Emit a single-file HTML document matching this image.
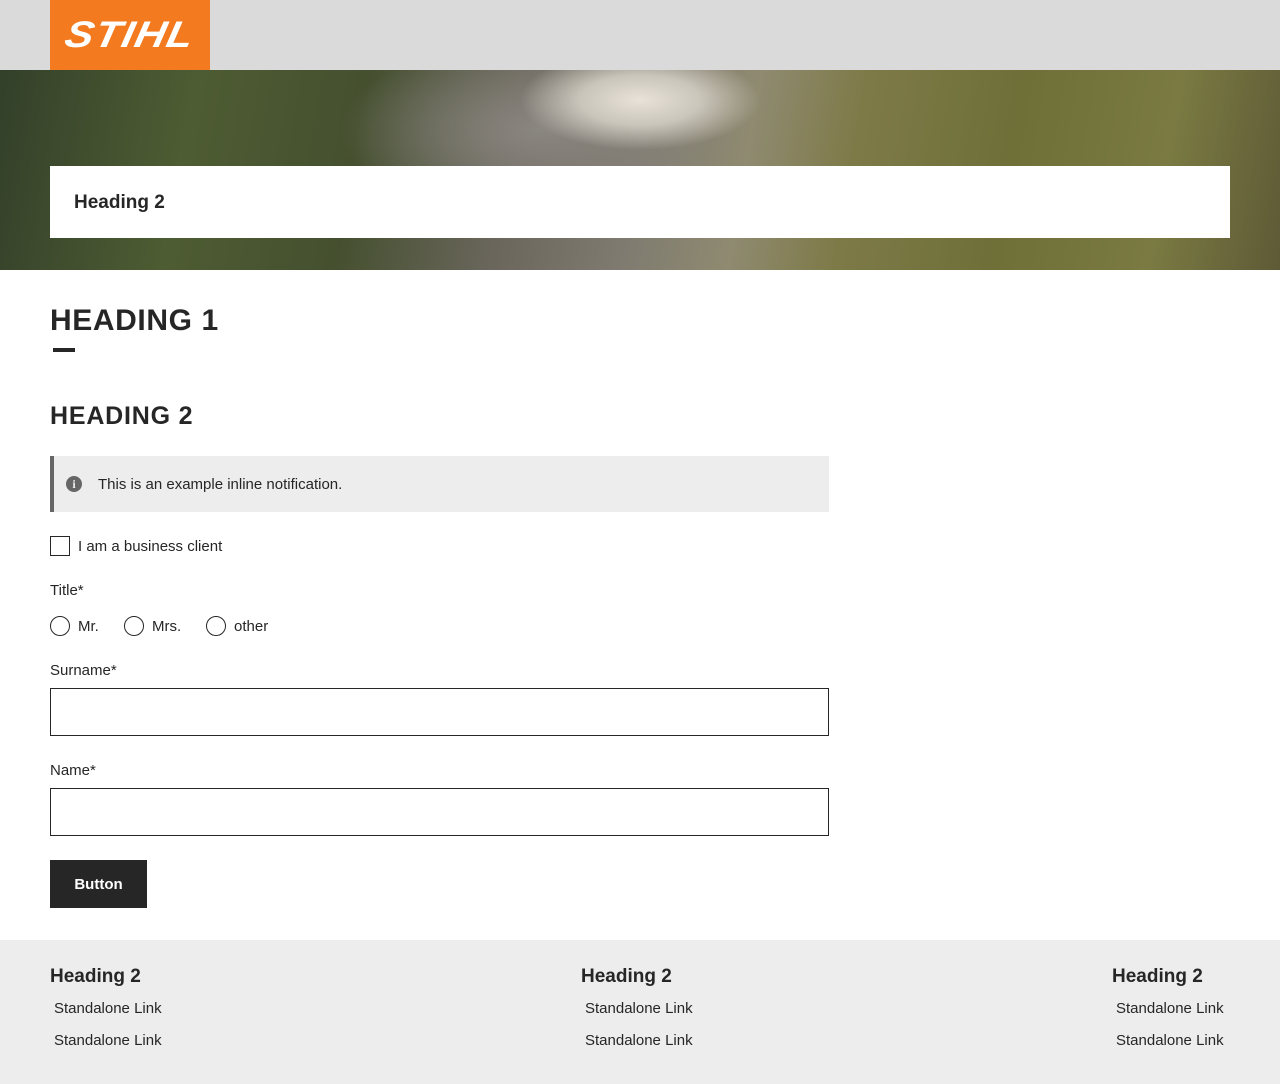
<!DOCTYPE html>
<html><head><meta charset="utf-8"><style>
*{box-sizing:border-box;margin:0;padding:0}
body{width:1280px;height:1084px;font-family:"Liberation Sans",sans-serif;color:#262626;background:#fff;position:relative;overflow:hidden}
.top{height:70px;background:#dadada;position:relative}
.logo{position:absolute;left:50px;top:0;width:160px;height:70px;background:#f37a1f;color:#fff;font-weight:bold;font-style:italic;font-size:37px;letter-spacing:1px;text-align:center;line-height:70px}
.logo span{display:inline-block;transform:skewX(-12deg) scaleX(1.15);}
.hero{position:absolute;top:70px;left:0;width:1280px;height:200px;background:
radial-gradient(ellipse 120px 50px at 640px 30px,#e8e2d8 0%,rgba(220,215,205,.8) 50%,transparent 100%),
radial-gradient(ellipse 200px 90px at 540px 60px,#8a8680 0%,transparent 100%),
linear-gradient(100deg,#33402a 0%,#4e5c33 15%,#45502f 28%,#6a665c 40%,#7f7b70 50%,#8f8a70 58%,#7e7a48 66%,#6e7038 78%,#7a7a42 90%,#5e5a36 100%)}
.hcard{position:absolute;left:50px;top:166px;width:1180px;height:72px;background:#fff;padding-left:24px;line-height:74px;font-weight:bold;font-size:19px}
.h1{position:absolute;left:50px;top:304px;font-size:30px;font-weight:900;letter-spacing:0.6px}
.bar{position:absolute;left:53px;top:348px;width:22px;height:4px;background:#262626}
.h2{position:absolute;left:50px;top:402px;font-size:25px;font-weight:900;letter-spacing:0.8px}
.note{position:absolute;left:50px;top:456px;width:779px;height:56px;background:#ededed;border-left:4px solid #666;font-size:15px;line-height:58px;padding-left:44px}
.note i{position:absolute;left:12px;top:20px;width:16px;height:16px;border-radius:50%;background:#666;color:#ededed;font-style:normal;font-weight:bold;font-size:12px;line-height:16px;text-align:center;font-family:"Liberation Serif",serif}
.t{position:absolute;font-size:15px;margin-top:2px}
.cb{position:absolute;left:50px;top:536px;width:20px;height:20px;border:1px solid #262626}
.rd{position:absolute;top:616px;width:20px;height:20px;border:1px solid #262626;border-radius:50%}
.inp{position:absolute;left:50px;width:779px;height:48px;border:1px solid #262626}
.btn{position:absolute;left:50px;top:860px;width:97px;height:48px;background:#262626;color:#fff;font-weight:bold;font-size:15px;line-height:50px;text-align:center}
.foot{position:absolute;left:0;top:940px;width:1280px;height:144px;background:#ededed}
.fh{position:absolute;top:966px;font-weight:bold;font-size:19px}
</style></head><body>
<div class="top"><div class="logo"><span>STIHL</span></div></div>
<div class="hero"></div>
<div class="hcard">Heading 2</div>
<div class="h1">HEADING 1</div><div class="bar"></div>
<div class="h2">HEADING 2</div>
<div class="note"><i>i</i>This is an example inline notification.</div>
<div class="cb"></div><div class="t" style="left:78px;top:536px">I am a business client</div>
<div class="t" style="left:50px;top:580px">Title*</div>
<div class="rd" style="left:50px"></div><div class="t" style="left:78px;top:616px">Mr.</div>
<div class="rd" style="left:124px"></div><div class="t" style="left:152px;top:616px">Mrs.</div>
<div class="rd" style="left:206px"></div><div class="t" style="left:234px;top:616px">other</div>
<div class="t" style="left:50px;top:660px">Surname*</div>
<div class="inp" style="top:688px"></div>
<div class="t" style="left:50px;top:760px">Name*</div>
<div class="inp" style="top:788px"></div>
<div class="btn">Button</div>
<div class="foot"></div>
<div class="fh" style="left:50px">Heading 2</div>
<div class="t" style="left:54px;top:998px">Standalone Link</div><div class="t" style="left:54px;top:1030px">Standalone Link</div>
<div class="fh" style="left:581px">Heading 2</div>
<div class="t" style="left:585px;top:998px">Standalone Link</div><div class="t" style="left:585px;top:1030px">Standalone Link</div>
<div class="fh" style="left:1112px">Heading 2</div>
<div class="t" style="left:1116px;top:998px">Standalone Link</div><div class="t" style="left:1116px;top:1030px">Standalone Link</div>
</body></html>
